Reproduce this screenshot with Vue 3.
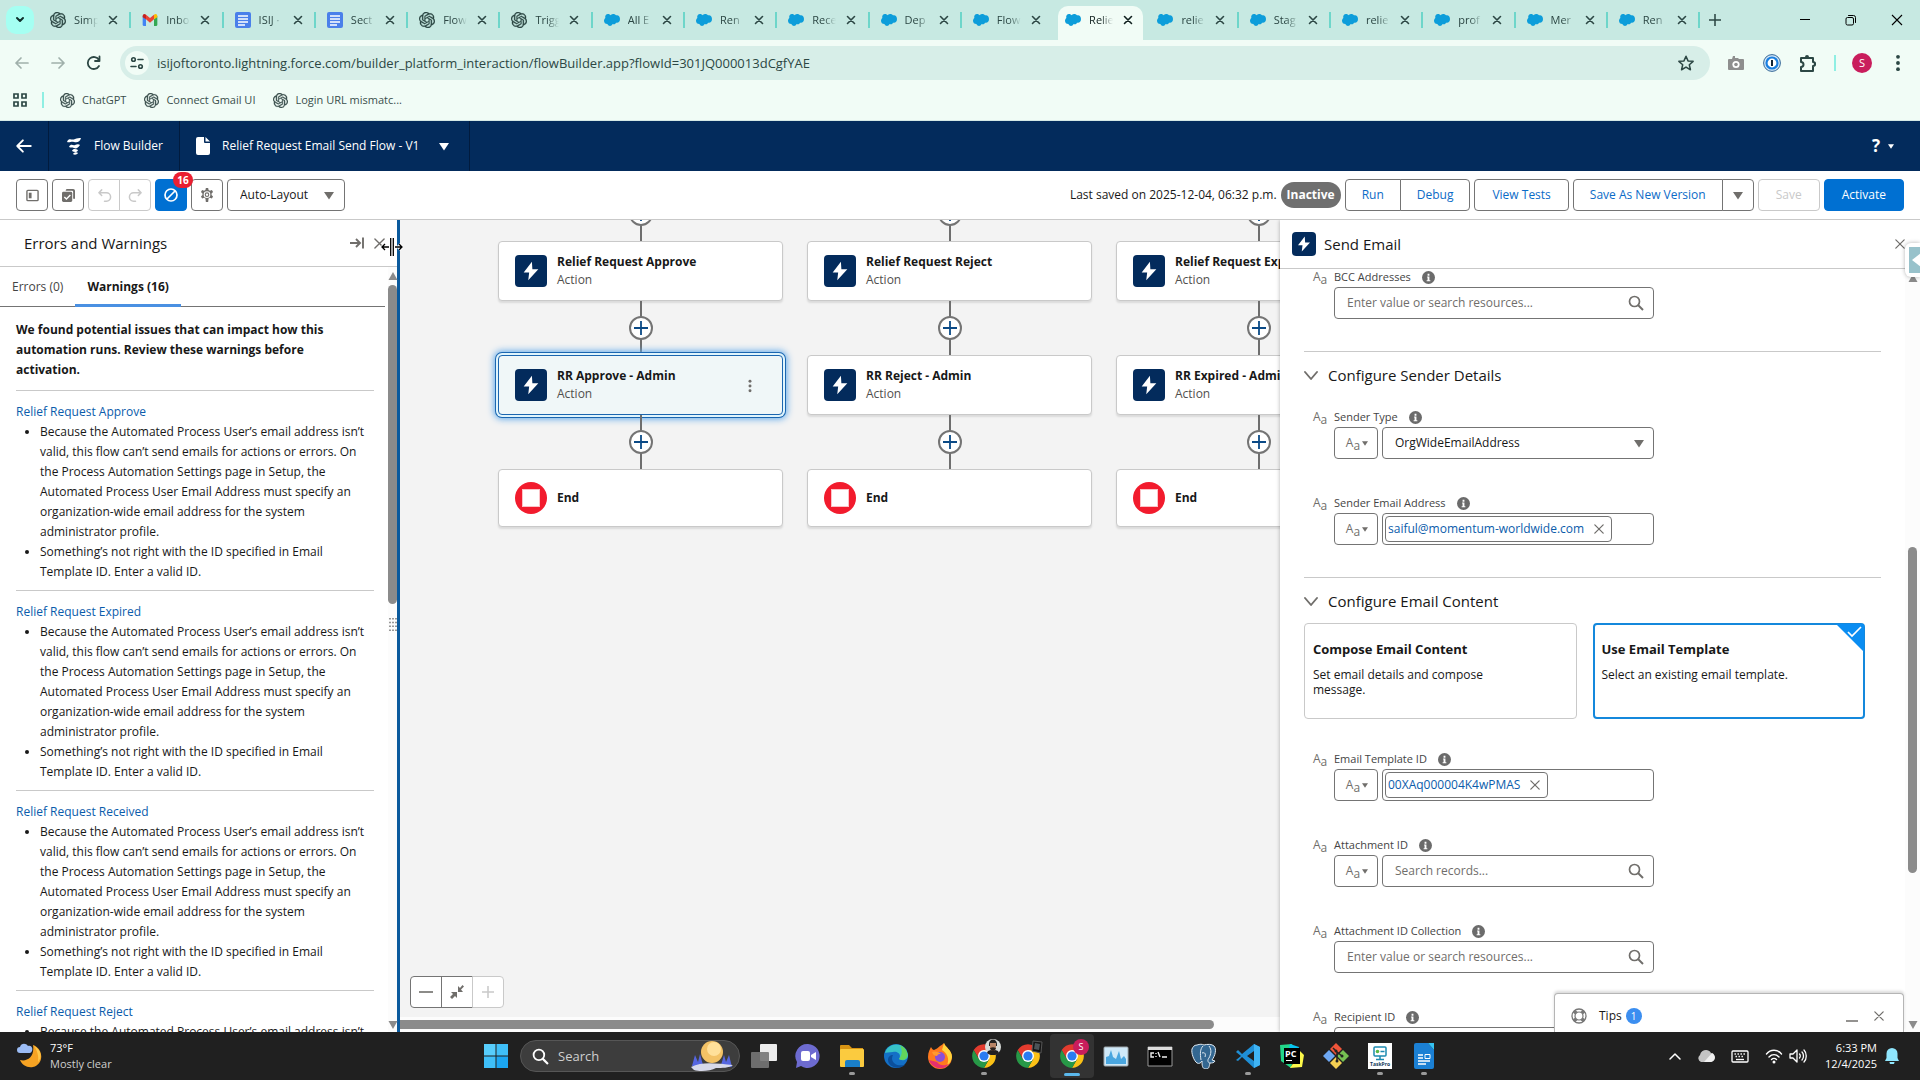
<template>
  <div class="screen">
    <header class="browser">
      <div class="tab-strip">
        <button class="tab-search" aria-label="Search tabs"><Icon name="chevronBold" :size="12" /></button>
        <div class="tabs">
          <div
            v-for="(tab, i) in browserTabs"
            :key="i"
            class="tab"
            :class="{ active: i === activeTab, 'no-line': i === activeTab - 1 || i === activeTab }"
          >
            <Icon :name="tab.icon" :size="16" />
            <span class="tab-title">{{ tab.title }}</span>
            <button class="tab-close" aria-label="Close tab"><Icon name="closeBold" :size="10" /></button>
          </div>
        </div>
        <button class="new-tab" aria-label="New tab"><Icon name="plus" :size="12" /></button>
        <div class="window-controls">
          <button aria-label="Minimize"><Icon name="winMin" :size="12" /></button>
          <button aria-label="Restore"><Icon name="winRestore" :size="12" /></button>
          <button aria-label="Close window"><Icon name="winClose" :size="12" /></button>
        </div>
      </div>

      <div class="address-row">
        <button class="nav-btn faded" aria-label="Back"><Icon name="arrowLeft" :size="16" /></button>
        <button class="nav-btn faded" aria-label="Forward"><Icon name="arrowRight" :size="16" /></button>
        <button class="nav-btn" aria-label="Reload"><Icon name="reload" :size="16" /></button>
        <div class="omnibox">
          <button class="site-info" aria-label="Site information"><Icon name="tune" :size="16" /></button>
          <input class="url" aria-label="Address" :value="url" />
          <button class="star" aria-label="Bookmark this tab"><Icon name="star" :size="18" /></button>
        </div>
        <div class="extensions">
          <button aria-label="Camera"><Icon name="camera" :size="18" /></button>
          <button aria-label="1Password"><Icon name="onePassword" :size="18" /></button>
          <button aria-label="Extensions"><Icon name="puzzle" :size="20" /></button>
        </div>
        <span class="mint-line"></span>
        <button class="avatar">S</button>
        <button class="browser-menu" aria-label="Menu"><Icon name="dots" :size="18" /></button>
      </div>

      <nav class="bookmarks">
        <button class="apps-btn" aria-label="Apps"><Icon name="apps" :size="16" /></button>
        <span class="mint-line"></span>
        <a v-for="name in bookmarks" :key="name" href="#" class="bookmark">
          <Icon name="openai" :size="15" />{{ name }}
        </a>
      </nav>
    </header>

    <div class="app-header">
      <a href="#" class="header-cell back" aria-label="Back"><Icon name="arrowLeft" :size="18" /></a>
      <div class="header-cell product"><Icon name="flow" :size="18" /><span>Flow Builder</span></div>
      <button class="header-cell flow-name">
        <Icon name="file" :size="18" /><span>Relief Request Email Send Flow - V1</span><Icon name="caret" :size="10" />
      </button>
      <button class="help" aria-label="Help"><b>?</b><Icon name="caret" :size="6" /></button>
    </div>

    <div class="toolbar">
      <button class="btn icon-btn" aria-label="Toggle toolbox"><Icon name="toolbox" :size="13" /></button>
      <button class="btn icon-btn" aria-label="Select elements"><Icon name="select" :size="13" /></button>
      <div class="group">
        <button class="btn icon-btn" disabled aria-label="Undo"><Icon name="undo" :size="15" /></button>
        <button class="btn icon-btn" disabled aria-label="Redo"><Icon name="redo" :size="15" /></button>
      </div>
      <button class="btn icon-btn brand errors-btn" aria-label="Errors and warnings">
        <Icon name="ban" :size="16" /><span class="count">16</span>
      </button>
      <button class="btn icon-btn" aria-label="Settings"><Icon name="gear" :size="14" /></button>
      <div class="layout-select">
        <select aria-label="Layout"><option>Auto-Layout</option></select>
        <Icon name="caret" :size="10" />
      </div>

      <span class="saved">Last saved on 2025-12-04, 06:32 p.m.</span>
      <span class="status">Inactive</span>
      <div class="group">
        <button class="btn text-btn">Run</button>
        <button class="btn text-btn">Debug</button>
      </div>
      <button class="btn text-btn wide">View Tests</button>
      <div class="group">
        <button class="btn text-btn">Save As New Version</button>
        <button class="btn icon-btn" aria-label="More save options"><Icon name="caret" :size="10" /></button>
      </div>
      <button class="btn text-btn wide" disabled>Save</button>
      <button class="btn text-btn wide brand">Activate</button>
    </div>

    <main class="workspace">
      <aside class="issues">
        <div class="issues-head">
          <h2>Errors and Warnings</h2>
          <button aria-label="Dock panel"><Icon name="dock" :size="14" /></button>
          <button aria-label="Close panel"><Icon name="close" :size="11" /></button>
        </div>
        <div class="issues-main">
          <div class="issues-body">
            <div class="issue-tabs" role="tablist">
              <button role="tab">Errors (0)</button>
              <button role="tab" class="current" aria-selected="true">Warnings (16)</button>
            </div>
            <div class="issue-list">
              <p class="intro">We found potential issues that can impact how this automation runs. Review these warnings before activation.</p>
              <section v-for="name in warnings" :key="name" class="issue">
                <a href="#">{{ name }}</a>
                <ul>
                  <li v-for="text in warningTexts" :key="text">{{ text }}</li>
                </ul>
              </section>
            </div>
          </div>
          <div class="scrollbar">
            <Icon name="scrollUp" :size="10" />
            <span class="thumb issues-thumb"></span>
            <Icon class="grip" name="grip" :size="14" />
            <Icon name="scrollDown" :size="10" />
          </div>
        </div>
        <Icon class="resize-cursor" name="resize" :size="22" />
      </aside>

      <section class="canvas">
        <div class="columns">
          <div v-for="column in columns" :key="column.first" class="column">
            <div class="link"><button aria-label="Add element"><Icon name="plus" :size="14" /></button></div>
            <article class="node">
              <span class="node-icon"><Icon name="bolt" :size="22" /></span>
              <div><h3>{{ column.first }}</h3><p>Action</p></div>
            </article>
            <div class="link"><button aria-label="Add element"><Icon name="plus" :size="14" /></button></div>
            <article class="node" :class="{ selected: column.selected }">
              <span class="node-icon"><Icon name="bolt" :size="22" /></span>
              <div><h3>{{ column.second }}</h3><p>Action</p></div>
              <button v-if="column.selected" class="node-menu" aria-label="Element menu"><Icon name="dots" :size="14" /></button>
            </article>
            <div class="link"><button aria-label="Add element"><Icon name="plus" :size="14" /></button></div>
            <article class="node end">
              <Icon name="stop" :size="32" />
              <h3>End</h3>
            </article>
          </div>
        </div>
        <div class="canvas-foot">
          <div class="group">
            <button class="btn icon-btn" aria-label="Zoom out"><Icon name="minus" :size="14" /></button>
            <button class="btn icon-btn" aria-label="Zoom to fit"><Icon name="fit" :size="14" /></button>
            <button class="btn icon-btn" disabled aria-label="Zoom in"><Icon name="plus" :size="12" /></button>
          </div>
        </div>
        <div class="h-scroll"><span></span></div>
      </section>

      <aside class="properties">
        <div class="prop-head">
          <span class="node-icon small"><Icon name="bolt" :size="18" /></span>
          <h2>Send Email</h2>
          <button aria-label="Close"><Icon name="close" :size="10" /></button>
        </div>
        <div class="prop-main">
          <form class="prop-body" @submit.prevent>
            <div v-for="group in groups" :key="group.key" class="prop-group">
              <button v-if="group.title" type="button" class="group-title">
                <Icon name="chevron" :size="14" />{{ group.title }}
              </button>
              <div v-if="group.picker" class="picker">
                <label v-for="option in contentOptions" :key="option.title" class="option">
                  <input type="radio" name="content" :value="option.title" v-model="contentMode" />
                  <strong>{{ option.title }}</strong>
                  <span>{{ option.text }}</span>
                  <Icon class="option-mark" name="mark" :size="28" />
                </label>
              </div>
              <div class="fields">
                <div v-for="field in group.fields" :key="field.id" class="field">
                  <div class="field-label">
                    <span class="type">A<sub>a</sub></span>
                    <label :for="field.id">{{ field.label }}</label>
                    <Icon name="info" :size="13" />
                  </div>
                  <div class="field-row">
                    <button v-if="field.typed" type="button" class="btn type-btn" aria-label="Value type">
                      <span class="type">A<sub>a</sub></span><Icon name="caret" :size="6" />
                    </button>
                    <div class="control" :class="{ filled: field.pill }">
                      <template v-if="field.select">
                        <select :id="field.id"><option>{{ field.select }}</option></select>
                        <Icon name="caret" :size="10" />
                      </template>
                      <template v-else-if="field.pill">
                        <span class="pill">
                          <a href="#">{{ field.pill }}</a>
                          <button type="button" aria-label="Remove"><Icon name="close" :size="10" /></button>
                        </span>
                        <input :id="field.id" />
                      </template>
                      <template v-else>
                        <input :id="field.id" :placeholder="field.placeholder" />
                        <Icon name="search" :size="16" />
                      </template>
                    </div>
                  </div>
                </div>
              </div>
            </div>
          </form>
          <div class="scrollbar">
            <Icon name="scrollUp" :size="10" />
            <span class="thumb prop-thumb"></span>
            <Icon name="scrollDown" :size="10" />
          </div>
        </div>
        <button class="side-handle" aria-label="Open side panel"><Icon name="handle" :size="26" /></button>
      </aside>

      <div class="tips">
        <Icon name="lifebuoy" :size="16" />
        <span class="tips-title">Tips</span>
        <span class="tips-count">1</span>
        <button aria-label="Minimize tips"><Icon name="low" :size="14" /></button>
        <button aria-label="Close tips"><Icon name="close" :size="10" /></button>
      </div>
    </main>

    <footer class="taskbar">
      <div class="weather">
        <Icon name="weather" :size="26" />
        <div><div>73°F</div><div class="soft">Mostly clear</div></div>
      </div>
      <div class="task-center">
        <button class="task" aria-label="Start"><Icon name="windows" :size="24" /></button>
        <label class="task-search">
          <Icon name="search" :size="17" />
          <input aria-label="Search" placeholder="Search" />
          <Icon name="moon" :size="44" />
        </label>
        <button v-for="(app, i) in apps" :key="i" class="task" :class="app.state" :aria-label="app.name">
          <Icon :name="app.icon" :size="26" />
          <span v-if="app.badge === 'S'" class="task-badge">S</span>
          <Icon v-else-if="app.badge" class="task-pic" :name="app.badge" :size="16" />
        </button>
      </div>
      <div class="tray">
        <Icon name="trayUp" :size="12" />
        <Icon name="cloud" :size="18" />
        <Icon name="keyboard" :size="18" />
        <span class="tray-pair"><Icon name="wifi" :size="18" /><Icon name="sound" :size="18" /></span>
        <time>6:33 PM<br />12/4/2025</time>
        <Icon name="bell" :size="16" />
      </div>
    </footer>
  </div>
</template>

<script setup>
import { h, ref } from 'vue'

const line = 'fill="none" stroke="currentColor" stroke-linecap="round" stroke-linejoin="round"'
const chrome = `<path fill="#fbc116" d="M43 13A22 22 0 0 1 24 46L33.500 29.500 24 13Z"/><path fill="#e33b2e" d="M5 13A22 22 0 0 1 43 13H24L14.500 29.500Z"/><path fill="#279847" d="M5 13L14.500 29.500H33.500L24 46A22 22 0 0 1 5 13Z"/><circle cx="24" cy="24" r="11" fill="#fff"/><circle cx="24" cy="24" r="8.500" fill="#2a7cf0"/>`

// name: [viewBox, markup]
const icons = {
  openai: ['0 0 24 24', '<path fill="currentColor" stroke="currentColor" stroke-width=".5" d="M22.2819 9.8211a5.9847 5.9847 0 0 0-.5157-4.9108 6.0462 6.0462 0 0 0-6.5098-2.9A6.0651 6.0651 0 0 0 4.9807 4.1818a5.9847 5.9847 0 0 0-3.9977 2.9 6.0462 6.0462 0 0 0 .7427 7.0966 5.98 5.98 0 0 0 .511 4.9107 6.051 6.051 0 0 0 6.5146 2.9001A5.9847 5.9847 0 0 0 13.2599 24a6.0557 6.0557 0 0 0 5.7718-4.2058 5.9894 5.9894 0 0 0 3.9977-2.9001 6.0557 6.0557 0 0 0-.7475-7.0729zm-9.022 12.6081a4.4755 4.4755 0 0 1-2.8764-1.0408l.1419-.0804 4.7783-2.7582a.7948.7948 0 0 0 .3927-.6813v-6.7369l2.02 1.1686a.071.071 0 0 1 .038.052v5.5826a4.504 4.504 0 0 1-4.4945 4.4944zm-9.6607-4.1254a4.4708 4.4708 0 0 1-.5346-3.0137l.142.0852 4.783 2.7582a.7712.7712 0 0 0 .7806 0l5.8428-3.3685v2.3324a.0804.0804 0 0 1-.0332.0615L9.74 19.9502a4.4992 4.4992 0 0 1-6.1408-1.6464zM2.3408 7.8956a4.485 4.485 0 0 1 2.3655-1.9728V11.6a.7664.7664 0 0 0 .3879.6765l5.8144 3.3543-2.0201 1.1685a.0757.0757 0 0 1-.071 0l-4.8303-2.7865A4.504 4.504 0 0 1 2.3408 7.872zm16.5963 3.8558L13.1038 8.364 15.1192 7.2a.0757.0757 0 0 1 .071 0l4.8303 2.7913a4.4944 4.4944 0 0 1-.6765 8.1042v-5.6772a.79.79 0 0 0-.407-.667zm2.0107-3.0231l-.142-.0852-4.7735-2.7818a.7759.7759 0 0 0-.7854 0L9.409 9.2297V6.8974a.0662.0662 0 0 1 .0284-.0615l4.8303-2.7866a4.4992 4.4992 0 0 1 6.6802 4.66zM8.3065 12.863l-2.02-1.1638a.0804.0804 0 0 1-.038-.0567V6.0742a4.4992 4.4992 0 0 1 7.3757-3.4537l-.142.0805L8.704 5.459a.7948.7948 0 0 0-.3927.6813zm1.0976-2.3654l2.602-1.4998 2.6069 1.4998v2.9994l-2.5974 1.4997-2.6067-1.4997Z"/>'],
  gmail: ['0 0 24 24', '<path fill="#4285f4" d="M1 6v13a2 2 0 0 0 2 2h3V11z"/><path fill="#34a853" d="M18 21h3a2 2 0 0 0 2-2V6l-5 5z"/><path fill="#ea4335" d="M6 11V4l6 5 6-5v7l-6 5z"/><path fill="#c5221f" d="M1 6c0-3 3-4 5-2v7L1 8z"/><path fill="#fbbc04" d="M23 6c0-3-3-4-5-2v7l5-3z"/>'],
  docs: ['0 0 16 16', '<rect width="16" height="16" rx="2" fill="#4a80ea"/><path stroke="#fff" stroke-width="1.600" d="M3 4h10M3 7h10M3 10h10M3 13h7"/>'],
  salesforce: ['0 0 24 24', '<path fill="#0d9dda" d="M10 5a5 5 0 0 1 4-2c2 0 3 1 4 2 3-1 6 1 6 5.500s-3 6.500-6 5.500c-1 2-3 3-5 2-2 4-6 4-8 0-3 0-5-2-5-5 0-1 1-3 2-4-1-3 1-6 4-6 2 0 3 1 4 2z"/>'],
  chevronBold: ['0 0 12 12', `<path ${line} stroke-width="2" d="M3 4l3 3 3-3"/>`],
  closeBold: ['0 0 10 10', `<path ${line} stroke-width="1.600" d="M1.500 1.500l7 7M8.500 1.500l-7 7"/>`],
  close: ['0 0 12 12', `<path ${line} stroke-width="1.500" d="M1 1l10 10M11 1L1 11"/>`],
  plus: ['0 0 14 14', '<path stroke="currentColor" stroke-width="1.800" d="M7 0v14M0 7h14"/>'],
  minus: ['0 0 14 14', '<path stroke="currentColor" stroke-width="1.600" d="M0 7h14"/>'],
  low: ['0 0 14 14', '<path stroke="currentColor" stroke-width="1.500" d="M1 12h12"/>'],
  winMin: ['0 0 12 12', '<path stroke="currentColor" d="M1 5.500h10"/>'],
  winRestore: ['0 0 12 12', `<path ${line} d="M3.500 1.500h5a2 2 0 0 1 2 2v5"/><rect x="1" y="3.500" width="7.500" height="7.500" rx="1.500" fill="none" stroke="currentColor"/>`],
  winClose: ['0 0 12 12', '<path stroke="currentColor" stroke-width="1.100" d="M1 1l10 10M11 1L1 11"/>'],
  arrowLeft: ['0 0 16 16', `<path ${line} stroke-width="1.700" d="M14 8H2M7 3L2 8l5 5"/>`],
  arrowRight: ['0 0 16 16', `<path ${line} stroke-width="1.700" d="M2 8h12M9 3l5 5-5 5"/>`],
  reload: ['0 0 16 16', `<path ${line} stroke-width="1.800" d="M13 11A6 6 0 1 1 13 5M13.500 1.500V6H9"/>`],
  tune: ['0 0 16 16', `<g ${line} stroke-width="1.600"><circle cx="4.500" cy="4.500" r="1.800"/><circle cx="11.500" cy="11.500" r="1.800"/><path d="M9 4.500h5M2 11.500h5"/></g>`],
  star: ['0 0 24 24', `<path ${line} stroke-width="2" d="M12 3l2.700 6.200 6.800.600-5.100 4.500 1.500 6.700-5.900-3.500L6.100 21l1.500-6.700-5.100-4.500 6.800-.600z"/>`],
  camera: ['0 0 18 18', '<path fill="#8e8e8e" d="M2 5h3l1-3h2v2h3l1 1h4a1 1 0 0 1 1 1v9a1 1 0 0 1-1 1H2a1 1 0 0 1-1-1V6a1 1 0 0 1 1-1z"/><circle cx="9" cy="10.500" r="3.600" fill="#fff"/><circle cx="9" cy="10.500" r="1.800" fill="#8e8e8e"/>'],
  onePassword: ['0 0 18 18', '<circle cx="9" cy="9" r="8.400" fill="#cfe4f7" stroke="#356796"/><circle cx="9" cy="9" r="5.500" fill="#fff" stroke="#1a7fe0" stroke-width="2.200"/><path stroke="#123" stroke-width="2" d="M9 6v6"/>'],
  puzzle: ['0 0 20 20', `<path ${line} stroke-width="2" d="M3 5h12v4a1 1 0 0 1 0 4v5H3v-4a2.500 2.500 0 0 0 0-5z"/><path fill="currentColor" d="M7 4a2 2 0 0 1 4 0zM16 9a2 2 0 0 1 0 4z"/>`],
  dots: ['0 0 16 16', '<g fill="currentColor"><circle cx="8" cy="2.500" r="1.700"/><circle cx="8" cy="8" r="1.700"/><circle cx="8" cy="13.500" r="1.700"/></g>'],
  apps: ['0 0 16 16', '<g fill="none" stroke="currentColor" stroke-width="1.700"><path d="M2 2h4v4H2zM10 2h4v4h-4zM2 10h4v4H2zM10 10h4v4h-4z"/></g>'],
  flow: ['0 0 18 18', '<g fill="currentColor"><path d="M2 5c2-5 5-1 8-3 2-1 4-1 6-1-1 4-4 5-7 4-3-1-4 1-7 0z"/><path d="M4 10c2-4 4-1 6-2 2-1 4-1 5 0-2 3-4 4-6 3-2-1-3 0-5-1z"/><path d="M7 14c1-3 4-2 6-1-1 3-4 2-6 1z"/><path d="M8 17c1-2 4-2 5-1-1 2-4 2-5 1z"/></g>'],
  file: ['0 0 18 18', '<path fill="currentColor" d="M4 0h6v5a1 1 0 0 0 1 1h5v10a2 2 0 0 1-2 2H4a2 2 0 0 1-2-2V2a2 2 0 0 1 2-2z"/><path fill="currentColor" d="M11.500 0l4.500 4.500h-4.500z"/>'],
  caret: ['0 0 10 10', '<path fill="currentColor" d="M0 2h10L5 9.500z"/>'],
  chevron: ['0 0 14 14', `<path ${line} stroke-width="1.900" d="M1 4l6 7 6-7"/>`],
  toolbox: ['0 0 14 14', '<rect x="1" y="1.500" width="12" height="11" rx="1" fill="none" stroke="currentColor" stroke-width="1.500"/><path fill="currentColor" d="M3 4h3v6H3z"/>'],
  select: ['0 0 14 14', `<path fill="currentColor" d="M5 0h7a2 2 0 0 1 2 2v7a1 1 0 0 1-2 1V3a1 1 0 0 0-1-1H4a2 2 0 0 1 1-2z"/><rect y="3" width="11" height="11" rx="1.500" fill="currentColor"/><path d="M2.500 8.500l2.300 2.300L9 6.500" fill="none" stroke="#fff" stroke-width="1.500"/>`],
  undo: ['0 0 16 16', `<path ${line} stroke-width="1.600" d="M2 5h8a4.500 4.500 0 0 1 0 9H8M5 2L2 5l3 3"/>`],
  redo: ['0 0 16 16', `<path ${line} stroke-width="1.600" d="M14 5H6a4.500 4.500 0 0 0 0 9h2M11 2l3 3-3 3"/>`],
  ban: ['0 0 16 16', '<circle cx="8" cy="8" r="6" fill="none" stroke="currentColor" stroke-width="1.700"/><path stroke="currentColor" stroke-width="1.700" d="M12 4l-8 8"/>'],
  gear: ['0 0 16 16', '<path fill="currentColor" fill-rule="evenodd" d="M6.700 0h2.600l.500 2.300 1.500.900 2.300-.800 1.300 2.300-1.700 1.600v1.800l1.700 1.600-1.300 2.300-2.300-.800-1.500.900L9.300 16H6.700l-.500-3.900-1.500-.900-2.300.800-1.300-2.300 1.700-1.600V6.300L1.100 4.700l1.300-2.300 2.300.800 1.500-.900zM8 3.800a3.800 3.800 0 1 0 0 7.600 3.800 3.800 0 0 0 0-7.600z"/><circle cx="8" cy="7.600" r="2" fill="none" stroke="currentColor" stroke-width="1.300"/>'],
  dock: ['0 0 14 14', '<path fill="none" stroke="currentColor" stroke-width="1.900" d="M0 7h9M6 3l4 4-4 4M13 1.500v11"/>'],
  scrollUp: ['0 0 10 10', '<path fill="#8b8b8b" d="M5 1l4.500 8h-9z"/>'],
  scrollDown: ['0 0 10 10', '<path fill="#8b8b8b" d="M5 9L.500 1h9z"/>'],
  grip: ['0 0 14 14', '<path stroke="#777" stroke-width="1.500" stroke-dasharray="1.500 2.300" d="M4 0v14M7 0v14M10 0v14"/>'],
  resize: ['0 0 22 22', '<path fill="none" stroke="#fff" stroke-width="3" d="M1 11h7M4 8l-3 3 3 3M21 11h-7M18 8l3 3-3 3M11 2v18"/><path fill="none" stroke="#000" stroke-width="1.300" d="M1 11h7M4 8l-3 3 3 3M21 11h-7M18 8l3 3-3 3M9.700 2v18M12.300 2v18"/>'],
  bolt: ['0 0 24 24', '<path fill="#fff" d="M13 2L4 13.500h6L9 22l11-12h-6.500z"/>'],
  stop: ['0 0 32 32', '<circle cx="16" cy="16" r="16" fill="#f21b2d"/><rect x="7.500" y="7.500" width="17" height="17" fill="#fff" stroke="#fcc3c7"/>'],
  fit: ['0 0 14 14', '<path fill="currentColor" d="M1 7h6v6l-2-2-3 3-2-2 3-3zM13 7H8V1l2 2 2.500-3L14 1.500 11 4.500z"/>'],
  info: ['0 0 14 14', '<circle cx="7" cy="7" r="7" fill="#6b6b6b"/><path fill="#fff" d="M6 3h2v2H6zM5.500 6H8v4h1v1H5v-1h1V7h-.500z"/>'],
  search: ['0 0 16 16', '<circle cx="6.500" cy="6.500" r="5" fill="none" stroke="currentColor" stroke-width="1.700"/><path stroke="currentColor" stroke-width="2" d="M10 10l5 5"/>'],
  mark: ['0 0 28 28', '<path fill="#0a8df2" d="M0 0h28v28z"/><path fill="none" stroke="#fff" stroke-width="1.700" d="M12 8l4 4 9-9"/>'],
  handle: ['0 0 26 26', '<path fill="#98c2cb" d="M0 0h26v26H0z"/><path fill="#fff" d="M12 6v14L3 13z"/>'],
  lifebuoy: ['0 0 16 16', '<circle cx="8" cy="8" r="7" fill="none" stroke="#777" stroke-width="1.300"/><circle cx="8" cy="8" r="4" fill="none" stroke="#777" stroke-width="1.200"/><path stroke="#777" stroke-width="3.500" d="M3 3l2.300 2.300M13 3l-2.300 2.300M3 13l2.300-2.300M13 13l-2.300-2.300"/>'],
  weather: ['0 0 26 26', '<path fill="#f6a323" d="M16 2c11 4 11 19 0 22-6 1-11-2-13-7 7 2 15-3 13-15z"/><path fill="#ffc84a" d="M17 3c8 4 8 12 4 16 1-6-1-12-4-16z"/><path fill="#9bbcf5" d="M3 10a3 3 0 0 1 0-6c1-4 6-4 8-1 4-1 5 3 4 5-1 2-2 2-3 2z"/>'],
  windows: ['0 0 24 24', '<path fill="#57cdfc" d="M0 0h11.500v11.500H0z"/><path fill="#3fbff8" d="M12.500 0H24v11.500H12.500zM0 12.500h11.500V24H0z"/><path fill="#1ba6f2" d="M12.500 12.500H24V24H12.500z"/>'],
  moon: ['0 0 44 30', '<circle cx="22" cy="11" r="11" fill="#f3c266"/><circle cx="24" cy="8" r="7" fill="#ffe09a"/><path fill="#5566e0" d="M2 25l3-11 3 7 2-8 3 11h18l3-10 2 7 3-7 3 12z"/><path fill="#d7d9ea" d="M1 26c12-6 27-3 42-2-4 3-11 3-17 3-5 3-16 4-22 2z"/>'],
  taskView: ['0 0 26 26', '<rect x="9" y="1" width="17" height="17" rx="1" fill="#ececec"/><rect x="0" y="9" width="18" height="16" rx="1" fill="#777" opacity=".9"/>'],
  chat: ['0 0 26 26', '<path fill="#6d6bd0" d="M13 1a12 12 0 1 1-7 22l-5 2 1-6A12 12 0 0 1 13 1z"/><rect x="6" y="8" width="9" height="10" rx="2" fill="#fff"/><path fill="#fff" d="M16 12l5-3v8l-5-3z"/>'],
  folder: ['0 0 26 26', '<path fill="#d89413" d="M1 3a1 1 0 0 1 1-1h8l3 3h11v4H1z"/><rect x="1" y="6" width="24" height="18" rx="1" fill="#fbcb3f"/><path fill="#1a7fc8" d="M6 24v-5a2 2 0 0 1 2-2h11a2 2 0 0 1 2 2v5z"/>'],
  edge: ['0 0 26 26', '<circle cx="13" cy="13" r="12" fill="#1470c6"/><path fill="#37c2c7" d="M2 10C5-1 22-2 25 12c0 6-7 6-9 4 3-5-2-8-6-7-4 0-7 1-8 1z"/><path fill="#62d65c" d="M17 2c5 2 9 8 7 12-2 4-7 3-8 2 4-5 3-10 1-14z"/><path fill="#0b4f9c" d="M10 12c-3 5 1 12 12 10-8 6-17 1-17-5 0-3 2-5 5-5z"/>'],
  firefox: ['0 0 26 26', '<path fill="#ff7a1e" d="M13 3c2-1 3-2 4-3 1 4 8 7 8 14a12 12 0 0 1-24 0C1 9 3 6 4 4c1 2 2 3 3 3 2-1 4-2 6-4z"/><path fill="#ffd43c" d="M17 0c1 4 8 7 8 14-1 5-3 7-5 8 3-6 0-12-5-15z"/><path fill="#e5306f" d="M2 17c3 9 15 11 20 4-5 2-9 2-12-2z"/><circle cx="13" cy="14" r="5" fill="#8a4fd8"/><path fill="#ff9a2e" d="M5 9c4-1 7 0 9 2-2 0-3 0-4 2-2 0-4-1-5-4z"/>'],
  chrome: ['0 0 48 48', chrome],
  monitor: ['0 0 26 26', '<rect x="1" y="4" width="24" height="19" rx="1" fill="#cfe9f8" stroke="#a0a8ad"/><path fill="#4aa6df" d="M3 21v-7l3-1 2-6 2 7 3 2 3-8 2 8 3-3 2 3v5z"/>'],
  terminal: ['0 0 26 26', '<path fill="#000" stroke="#999" d="M1 4h24v19H1z"/><path fill="#ddd" d="M1 4h24v3H1z"/><path fill="none" stroke="#eee" stroke-width="1.400" d="M7 10H4v4h3M9 10v1M9 13v1M11 9l2 5M15 14h5"/>'],
  postgres: ['0 0 26 26', '<path fill="#336791" stroke="#dfe9f1" d="M6 2c3-1 5-1 7 0 3-1 8-1 10 1 3 3 1 10-2 14l3 1c-1 2-3 2-5 2-1 4-1 6-4 6-4 0-4-4-4-8-1 2-3 3-5 2C3 18 0 10 1 6c1-2 2-4 5-4z"/><path fill="none" stroke="#dfe9f1" d="M12 3c-3 3-3 8-2 14M18 3c3 4 2 8 0 12-2 2-1 5 1 5M11 10c3-1 4 1 3 4"/>'],
  vscode: ['0 0 26 26', '<path fill="#1f8fd6" d="M19 1l6 3v18l-6 3L7 14l-4 4-2-1 5-4-5-4 2-2 4 4zM19 8l-7 5 7 5z"/><path fill="#3fb4f4" d="M19 1l6 3v18l-6 3z"/>'],
  pycharm: ['0 0 26 26', '<path fill="#22d789" d="M1 2l12-1 3 8-4 16-10-7z"/><path fill="#07c3f2" d="M11 1l9 3-2 8-9-2z"/><path fill="#fcf84a" d="M19 6l6 6-2 12-12 1 6-9z"/><path fill="#000" d="M5 5h16v16H5z"/><text x="6" y="14" font-family="Open Sans" font-size="9" font-weight="700" fill="#fff">PC</text><path fill="#fff" d="M7 17h6v1H7z"/>'],
  git: ['0 0 26 26', '<path fill="#f0553a" d="M13 0l6 6-6 6-6-6z"/><path fill="#6ea8f3" d="M6 7l6 6-6 6-6-6z"/><path fill="#75c152" d="M20 7l6 6-6 6-6-6z"/><path fill="#f5cf52" d="M13 14l6 6-6 6-6-6z"/><path fill="none" stroke="#222" stroke-width="1.500" d="M10 5l4 4v9M14 9l5 4"/><g fill="#222"><circle cx="13" cy="8" r="1.500"/><circle cx="14" cy="18" r="1.500"/><circle cx="19" cy="13" r="1.500"/></g>'],
  taskpro: ['0 0 26 26', '<path fill="#fff" d="M1 0h24v26H1z"/><rect x="7" y="4" width="12" height="9" rx="1" fill="#fff" stroke="#1d8ab0" stroke-width="1.500"/><circle cx="10.500" cy="8.500" r="1.800" fill="#58b947"/><path stroke="#1d8ab0" stroke-width="1.500" d="M13.500 8.500h4M13 13v3M9 16.500h8"/><text x="3" y="23" font-family="Open Sans" font-size="5" font-weight="700" fill="#123a5a">TaskPro</text>'],
  writer: ['0 0 26 26', '<path fill="#1b80d4" d="M5 0h12l6 7v17a2 2 0 0 1-2 2H5a2 2 0 0 1-2-2V2a2 2 0 0 1 2-2z"/><path fill="#35c3f1" d="M17 0h6v7z"/><path stroke="#fff" stroke-width="1.400" d="M7 12h5M7 15h5M7 18h12M7 21h8"/><path fill="none" stroke="#fff" d="M14 11.500h5v4h-5z"/>'],
  person: ['0 0 16 16', '<circle cx="8" cy="8" r="8" fill="#d8dbd8"/><path fill="#23201f" d="M2 14c1-3 3-3 6-3s5 0 6 3c-3 3-9 3-12 0zM4 5c0-6 8-6 8 0v2H4z"/><path fill="#b98566" d="M5 4h6v5c-1 4-5 4-6 0z"/><path fill="#2a211d" d="M5 9c2-1 4-1 6 0-1 4-5 4-6 0z"/>'],
  gadget: ['0 0 16 16', '<path fill="#161616" stroke="#555" d="M4 2l9 1-1 11-9-2z"/><path fill="#4b5358" d="M6 4l5 1-1 6-5-1z"/>'],
  trayUp: ['0 0 12 12', `<path ${line} stroke-width="1.500" d="M1 9l5-5 5 5"/>`],
  cloud: ['0 0 18 18', '<path fill="#c4c4c4" d="M4 15a4 4 0 0 1-1-7c1-5 8-7 11-2 5 1 5 8 0 9z"/><path fill="#efefef" d="M7 15l8-9c4 2 4 8-1 9z"/>'],
  keyboard: ['0 0 18 18', `<rect x="1" y="4" width="16" height="11" rx="1" ${line} stroke-width="1.300"/><path stroke="currentColor" stroke-width="1.400" stroke-dasharray="1.400 1.600" d="M3.500 7h11M4.500 9.500h9"/><path stroke="currentColor" stroke-width="1.300" d="M5 12.500h8"/>`],
  wifi: ['0 0 18 18', `<g ${line} stroke-width="1.400"><path d="M1.500 7c4-5 11-5 15 0M4 10c3-3 7-3 10 0M6.500 12.500c1.500-1.500 3.500-1.500 5 0"/></g><circle cx="9" cy="15" r="1.500" fill="currentColor"/>`],
  sound: ['0 0 18 18', `<path ${line} stroke-width="1.300" d="M1 7v4h3l4 4V3L4 7zM10.500 7c1 1 1 3 0 4M13 5c2 2 2 6 0 8M15 3c3 3 3 9 0 12"/>`],
  bell: ['0 0 16 16', '<path fill="#8fe6fd" d="M8 0a5.500 5.500 0 0 1 5.500 5.500V10l1.500 3H1l1.500-3V5.500A5.500 5.500 0 0 1 8 0zM5.500 14h5a2.500 2.500 0 0 1-5 0z"/>']
}

const Icon = ({ name, size }) =>
  h('svg', {
    viewBox: icons[name][0],
    width: size,
    height: size,
    'aria-hidden': 'true',
    innerHTML: icons[name][1]
  })

const browserTabs = [
  { icon: 'openai', title: 'Simp' },
  { icon: 'gmail', title: 'Inbo' },
  { icon: 'docs', title: 'ISIJ ·' },
  { icon: 'docs', title: 'Sect' },
  { icon: 'openai', title: 'Flow' },
  { icon: 'openai', title: 'Trigg' },
  { icon: 'salesforce', title: 'All E' },
  { icon: 'salesforce', title: 'Ren' },
  { icon: 'salesforce', title: 'Rece' },
  { icon: 'salesforce', title: 'Dep' },
  { icon: 'salesforce', title: 'Flow' },
  { icon: 'salesforce', title: 'Relie' },
  { icon: 'salesforce', title: 'relie' },
  { icon: 'salesforce', title: 'Stag' },
  { icon: 'salesforce', title: 'relie' },
  { icon: 'salesforce', title: 'prof' },
  { icon: 'salesforce', title: 'Mer' },
  { icon: 'salesforce', title: 'Ren' }
]
const activeTab = 11
const url = 'isijoftoronto.lightning.force.com/builder_platform_interaction/flowBuilder.app?flowId=301JQ000013dCgfYAE'
const bookmarks = ['ChatGPT', 'Connect Gmail UI', 'Login URL mismatc...']

const warnings = ['Relief Request Approve', 'Relief Request Expired', 'Relief Request Received', 'Relief Request Reject']
const warningTexts = [
  'Because the Automated Process User’s email address isn’t valid, this flow can’t send emails for actions or errors. On the Process Automation Settings page in Setup, the Automated Process User Email Address must specify an organization-wide email address for the system administrator profile.',
  'Something’s not right with the ID specified in Email Template ID. Enter a valid ID.'
]

const columns = [
  { first: 'Relief Request Approve', second: 'RR Approve - Admin', selected: true },
  { first: 'Relief Request Reject', second: 'RR Reject - Admin' },
  { first: 'Relief Request Expired', second: 'RR Expired - Admin' }
]

const contentMode = ref('Use Email Template')
const contentOptions = [
  { title: 'Compose Email Content', text: 'Set email details and compose message.' },
  { title: 'Use Email Template', text: 'Select an existing email template.' }
]
const resourceHint = 'Enter value or search resources...'
const groups = [
  { key: 'recipients', fields: [{ id: 'bcc', label: 'BCC Addresses', placeholder: resourceHint }] },
  {
    key: 'sender',
    title: 'Configure Sender Details',
    fields: [
      { id: 'sender-type', label: 'Sender Type', typed: true, select: 'OrgWideEmailAddress' },
      { id: 'sender-email', label: 'Sender Email Address', typed: true, pill: 'saiful@momentum-worldwide.com' }
    ]
  },
  {
    key: 'content',
    title: 'Configure Email Content',
    picker: true,
    fields: [
      { id: 'template', label: 'Email Template ID', typed: true, pill: '00XAq000004K4wPMAS' },
      { id: 'attachment', label: 'Attachment ID', typed: true, placeholder: 'Search records...' },
      { id: 'attachments', label: 'Attachment ID Collection', placeholder: resourceHint },
      { id: 'recipient', label: 'Recipient ID', placeholder: resourceHint }
    ]
  }
]

const apps = [
  { name: 'Task view', icon: 'taskView' },
  { name: 'Chat', icon: 'chat' },
  { name: 'File Explorer', icon: 'folder', state: 'running' },
  { name: 'Edge', icon: 'edge' },
  { name: 'Firefox', icon: 'firefox' },
  { name: 'Chrome', icon: 'chrome', state: 'running', badge: 'person' },
  { name: 'Chrome', icon: 'chrome', badge: 'gadget' },
  { name: 'Chrome', icon: 'chrome', state: 'current', badge: 'S' },
  { name: 'Resource Monitor', icon: 'monitor' },
  { name: 'Command Prompt', icon: 'terminal' },
  { name: 'pgAdmin', icon: 'postgres' },
  { name: 'VS Code', icon: 'vscode', state: 'running' },
  { name: 'PyCharm', icon: 'pycharm' },
  { name: 'Git', icon: 'git' },
  { name: 'TaskPro', icon: 'taskpro', state: 'running' },
  { name: 'Writer', icon: 'writer', state: 'running' }
]
</script>

<style>
body {
  overflow: hidden;
}
</style>

<style scoped>
* {
  box-sizing: border-box;
}

.screen {
  display: grid;
  grid-template-rows: auto auto auto minmax(0, 1fr) auto;
  height: 100vh;
  font-family: 'Open Sans', 'Noto Sans', sans-serif;
  font-size: 12px;
  line-height: 20px;
  color: #181818;
  background: #fff;
}

button,
input,
select {
  font: inherit;
  color: inherit;
  margin: 0;
  padding: 0;
  border: 0;
  background: none;
  outline: none;
}

button {
  display: flex;
  align-items: center;
  justify-content: center;
}

h2,
h3,
p,
ul {
  margin: 0;
  padding: 0;
}

a {
  color: #0b5cab;
  text-decoration: none;
}

svg {
  flex: none;
  display: block;
}

/* browser */
.browser {
  background: #f1fcf6;
  border-bottom: 1px solid #d5e9e6;
  color: #2c4744;
}

.tab-strip {
  display: flex;
  align-items: center;
  height: 40px;
  padding-left: 6px;
  background: #c7e9e2;
}

.tab-search {
  width: 28px;
  height: 28px;
  margin-right: 5px;
  border-radius: 10px;
  background: #a5fff2;
  color: #10302c;
}

.tabs {
  display: flex;
  flex: 1;
  align-self: stretch;
}

.tab {
  flex: 1;
  display: flex;
  align-items: center;
  position: relative;
  min-width: 0;
  padding-left: 11px;
  font-size: 11px;
}

.tab::after {
  content: '';
  position: absolute;
  right: 0;
  top: 12px;
  width: 2px;
  height: 16px;
  background: #6ed6ca;
}

.tab.no-line::after {
  display: none;
}

.tab > svg {
  position: relative;
}

.tab.active {
  color: #10201f;
}

.tab.active::before {
  content: '';
  position: absolute;
  inset: 6px 3px 0 4px;
  border-radius: 10px 10px 0 0;
  background: #f1fcf6;
}

.tab-title {
  position: relative;
  width: 24px;
  margin-left: 8px;
  overflow: hidden;
  white-space: nowrap;
  mask-image: linear-gradient(90deg, #000 50%, transparent);
}

.tab-close {
  position: relative;
  width: 16px;
  height: 16px;
  margin-left: 7px;
}

.new-tab {
  width: 30px;
  height: 30px;
}

.window-controls {
  display: flex;
  margin-left: 52px;
  color: #000;
}

.window-controls button {
  width: 46px;
  height: 40px;
}

.address-row {
  display: flex;
  align-items: center;
  height: 46px;
  padding: 0 13px 0 4px;
}

.nav-btn {
  width: 36px;
  height: 32px;
}

.faded {
  color: #a0b0ab;
}

.omnibox {
  flex: 1;
  display: flex;
  align-items: center;
  height: 34px;
  margin: 0 12px 0 8px;
  padding: 0 15px 0 5px;
  border-radius: 17px;
  background: #d7eee8;
}

.site-info {
  width: 24px;
  height: 24px;
  border-radius: 50%;
  background: #f1fcf6;
}

.url {
  flex: 1;
  min-width: 0;
  margin-left: 8px;
  font-size: 13px;
}

.extensions {
  display: flex;
  gap: 8px;
  padding-right: 12px;
}

.extensions button {
  width: 28px;
  height: 28px;
}

.mint-line {
  width: 2px;
  height: 16px;
  background: #8fefe3;
}

.avatar {
  width: 20px;
  height: 20px;
  margin-left: 16px;
  border-radius: 50%;
  background: #c91d5c;
  color: #fff;
  font-size: 11px;
}

.browser-menu {
  margin-left: 17px;
}

.bookmarks {
  display: flex;
  align-items: center;
  height: 34px;
  padding: 0 12px 6px;
}

.apps-btn {
  margin-right: 14px;
}

.bookmark {
  display: flex;
  align-items: center;
  gap: 7px;
  margin-left: 16px;
  color: #3a4f4c;
  font-size: 11px;
}

.bookmark + .bookmark {
  margin-left: 18px;
}

/* app header */
.app-header {
  display: flex;
  height: 50px;
  background: #032b5c;
  color: #fff;
}

.header-cell {
  display: flex;
  align-items: center;
  border-right: 1px solid #011b3e;
  color: #fff;
}

.back {
  justify-content: center;
  width: 49px;
}

.product {
  gap: 11px;
  padding: 0 16px;
}

.flow-name {
  gap: 10px;
  padding: 0 20px 0 14px;
}

.flow-name svg:last-child {
  margin-left: 10px;
}

.help {
  gap: 8px;
  margin-left: auto;
  padding-right: 26px;
}

.help b {
  font-size: 17px;
}

/* toolbar */
.toolbar {
  display: flex;
  align-items: center;
  gap: 4px;
  height: 49px;
  padding: 0 16px;
  border-bottom: 1px solid #c9c9c9;
}

.btn {
  height: 32px;
  border: 1px solid #747474;
  border-radius: 4px;
  background: #fff;
  color: #706e6b;
  white-space: nowrap;
}

.icon-btn {
  width: 32px;
}

.text-btn {
  padding: 0 16px;
  color: #0b6bc7;
}

.text-btn.wide {
  padding: 0 17px;
}

.btn:disabled {
  border-color: #c9c9c9;
  color: #c9c9c9;
}

.btn.brand {
  border-color: #0070d2;
  background: #0070d2;
  color: #fff;
}

.group {
  display: flex;
}

.group .btn:not(:first-child) {
  margin-left: -1px;
  border-top-left-radius: 0;
  border-bottom-left-radius: 0;
}

.group .btn:not(:last-child) {
  border-top-right-radius: 0;
  border-bottom-right-radius: 0;
}

.errors-btn {
  position: relative;
}

.count {
  position: absolute;
  top: -8px;
  right: -7px;
  width: 20px;
  border-radius: 8px;
  background: #ea1f31;
  font-size: 10px;
  font-weight: 700;
  line-height: 16px;
}

.layout-select {
  display: flex;
  align-items: center;
  height: 32px;
  width: 118px;
  padding: 0 10px 0 12px;
  border: 1px solid #747474;
  border-radius: 4px;
  color: #706e6b;
}

select {
  appearance: none;
  flex: 1;
  min-width: 0;
  color: #181818;
}

.saved {
  margin-left: auto;
  white-space: nowrap;
}

.status {
  padding: 3px 6px;
  border-radius: 13px;
  background: #6f6f6f;
  color: #fff;
  font-weight: 700;
}

/* workspace */
.workspace {
  display: grid;
  grid-template-columns: 400px minmax(0, 1fr) 640px;
  position: relative;
  overflow: hidden;
}

.issues {
  position: relative;
  display: flex;
  flex-direction: column;
  min-height: 0;
  border-right: 3px solid #0b5a9d;
}

h2 {
  font-size: 15px;
  font-weight: 400;
}

.issues-head {
  flex: none;
  display: flex;
  align-items: center;
  gap: 10px;
  height: 47px;
  padding: 0 12px 0 24px;
  border-bottom: 1px solid #c9c9c9;
  color: #706e6b;
}

.issues-head h2 {
  flex: 1;
  color: #181818;
}

.issues-main,
.prop-main {
  flex: 1;
  display: flex;
  min-height: 0;
}

.issues-body {
  flex: 1;
  overflow: hidden;
}

.issue-tabs {
  display: flex;
  height: 40px;
  margin-right: 3px;
  border-bottom: 1px solid #747474;
}

.issue-tabs button {
  height: 40px;
  padding: 0 12px;
  color: #444;
}

.issue-tabs .current {
  border-bottom: 3px solid #4a90e2;
  padding-top: 3px;
  color: #181818;
  font-weight: 700;
}

.issue-list {
  padding: 13px 14px 0 16px;
}

.intro {
  padding: 0 24px 10px 0;
  font-weight: 700;
}

.issue {
  padding: 11px 0 8px;
  border-top: 1px solid #c9c9c9;
}

.issue ul {
  padding-left: 24px;
}

.scrollbar {
  flex: none;
  display: flex;
  flex-direction: column;
  align-items: center;
  width: 9px;
  padding: 4px 0 2px;
  background: #fcfcfc;
}

.scrollbar svg:last-child {
  margin-top: auto;
}

.thumb {
  width: 9px;
  border-radius: 5px;
  background: #8b8b8b;
}

.issues-thumb {
  flex: 0 0 42%;
  margin: 4px 0 14px;
}

.prop-thumb {
  flex: 0 0 43%;
  margin-top: 264px;
}

.resize-cursor {
  position: absolute;
  top: 16px;
  right: -6px;
  z-index: 2;
}

/* canvas */
.canvas {
  display: flex;
  flex-direction: column;
  overflow: hidden;
  background: #f3f3f3;
}

.columns {
  flex: 1;
  display: flex;
  gap: 24px;
  min-height: 0;
  margin-top: -33px;
  padding-left: 98px;
}

.column {
  flex: none;
  width: 285px;
}

.link {
  display: flex;
  align-items: center;
  justify-content: center;
  height: 54px;
  background: linear-gradient(#6e6e6e, #6e6e6e) center / 2px 100% no-repeat;
}

.link button {
  width: 24px;
  height: 24px;
  border: 2px solid #747474;
  border-radius: 50%;
  background: #fff;
  color: #0b4a86;
}

.node {
  display: flex;
  align-items: center;
  gap: 10px;
  height: 60px;
  padding: 0 16px;
  border: 1px solid #c9c9c9;
  border-radius: 4px;
  background: #fff;
  box-shadow: 0 2px 2px rgba(0, 0, 0, 0.1);
  line-height: 18px;
}

.node.end {
  height: 58px;
}

.node h3 {
  font-size: 12px;
  font-weight: 700;
}

.node p {
  color: #514f4d;
}

.node-icon {
  flex: none;
  display: flex;
  align-items: center;
  justify-content: center;
  width: 32px;
  height: 32px;
  border-radius: 4px;
  background: #032b5c;
}

.node-icon.small {
  width: 24px;
  height: 24px;
}

.node.selected {
  border-color: #1b66b0;
  background: #f0f7f8;
  box-shadow: 0 0 0 2px #e0f5fd, 0 0 0 3px #1b66b0, 0 0 7px 4px #5ea8ea;
}

.node-menu {
  margin: 2px 9px 0 auto;
  color: #706e6b;
}

.canvas-foot {
  padding: 0 10px 9px;
}

.h-scroll {
  height: 15px;
  padding: 3px 66px 3px 0;
  background: #fcfcfc;
}

.h-scroll span {
  display: block;
  height: 9px;
  border-radius: 0 5px 5px 0;
  background: #8b8b8b;
}

/* properties */
.properties {
  position: relative;
  display: flex;
  flex-direction: column;
  min-height: 0;
  background: #fff;
  box-shadow: 0 0 4px rgba(0, 0, 0, 0.3);
}

.prop-head {
  flex: none;
  display: flex;
  align-items: center;
  gap: 8px;
  height: 49px;
  padding: 0 15px 0 12px;
  border-bottom: 1px solid #c9c9c9;
}

.prop-head h2 {
  flex: 1;
}

.prop-head button {
  color: #706e6b;
}

.prop-main .scrollbar {
  width: 15px;
}

.prop-body {
  flex: 1;
  overflow: hidden;
  padding: 0 24px;
}

.prop-group:first-child {
  margin-top: -12px;
}

.prop-group + .prop-group {
  margin-top: 32px;
  border-top: 1px solid #c9c9c9;
}

.group-title {
  gap: 10px;
  height: 45px;
  color: #181818;
  font-size: 15px;
}

.group-title svg {
  color: #706e6b;
}

.picker {
  display: grid;
  grid-template-columns: 1fr 1fr;
  gap: 16px;
  margin: 0 16px 20px 0;
}

.option {
  position: relative;
  display: flex;
  flex-direction: column;
  height: 96px;
  padding: 15px 60px 0 8px;
  border: 1px solid #c9c9c9;
  border-radius: 4px;
  line-height: 15px;
}

.option strong {
  margin-bottom: 8px;
  font-size: 13px;
  line-height: 20px;
}

.option input {
  position: absolute;
  opacity: 0;
}

.option-mark {
  position: absolute;
  top: -1px;
  right: -1px;
  visibility: hidden;
}

.option:has(:checked) {
  padding: 14px 59px 0 7px;
  border: 2px solid #1488dc;
}

.option:has(:checked) .option-mark {
  visibility: visible;
}

.fields {
  display: flex;
  flex-direction: column;
  gap: 34px;
  padding: 10px 0 0 9px;
}

.field-label {
  display: flex;
  align-items: center;
  height: 20px;
  color: #444;
  font-size: 11px;
}

.field-label svg {
  margin-left: 11px;
}

.type {
  flex: none;
  width: 21px;
  color: #706e6b;
  font-size: 12px;
  line-height: 16px;
}

.type sub {
  font-size: 12px;
  line-height: 0;
}

.field-row {
  display: flex;
  gap: 4px;
  width: 320px;
  margin-left: 21px;
}

.type-btn {
  width: 44px;
}

.type-btn .type {
  width: 18px;
}

.control {
  flex: 1;
  display: flex;
  align-items: center;
  height: 32px;
  min-width: 0;
  padding: 0 9px 0 12px;
  border: 1px solid #747474;
  border-radius: 4px;
  color: #706e6b;
}

.control.filled {
  padding: 0 2px;
}

.control input {
  flex: 1;
  min-width: 0;
  color: #181818;
}

.control input::placeholder {
  color: #706e6b;
}

.pill {
  display: flex;
  align-items: center;
  gap: 10px;
  height: 26px;
  padding: 0 7px 0 2px;
  border: 1px solid #747474;
  border-radius: 4px;
}

.side-handle {
  position: absolute;
  top: 23px;
  right: 0;
  width: 15px;
  height: 34px;
  justify-content: flex-start;
  overflow: hidden;
  padding-left: 4px;
  border-radius: 6px 0 0 6px;
  background: #fff;
  box-shadow: 0 0 4px rgba(0, 0, 0, 0.3);
}

.tips {
  position: absolute;
  right: 16px;
  bottom: 0;
  display: flex;
  align-items: center;
  width: 350px;
  height: 39px;
  padding: 6px 19px 0 16px;
  border: 1px solid #b5b5b5;
  border-bottom: 0;
  border-radius: 4px 4px 0 0;
  background: #fff;
  box-shadow: 0 -2px 3px rgba(0, 0, 0, 0.15);
}

.tips-title {
  margin: 0 4px 0 12px;
}

.tips-count {
  width: 16px;
  height: 16px;
  margin-right: auto;
  border-radius: 50%;
  background: #3b8ef0;
  color: #fff;
  font-size: 10px;
  line-height: 16px;
  text-align: center;
}

.tips button {
  margin-left: 15px;
  color: #706e6b;
}

/* taskbar */
.taskbar {
  display: grid;
  grid-template-columns: 1fr auto 1fr;
  align-items: center;
  height: 48px;
  background: #202020;
  color: #fff;
  font-size: 11px;
  line-height: 16px;
}

.weather {
  display: flex;
  align-items: center;
  gap: 7px;
  padding-left: 17px;
}

.soft {
  color: #cfcfcf;
}

.task-center {
  display: flex;
  align-items: center;
}

.task {
  position: relative;
  width: 44px;
  height: 44px;
}

.task-search {
  display: flex;
  align-items: center;
  gap: 9px;
  width: 220px;
  height: 32px;
  margin: 0 2px;
  padding: 0 5px 0 11px;
  border: 1px solid #565656;
  border-radius: 16px;
  background: #3d3d3d;
}

.task-search input {
  flex: 1;
  min-width: 0;
  font-size: 13px;
}

.task-search input::placeholder {
  color: #cfcfcf;
}

.running::after,
.current::after {
  content: '';
  position: absolute;
}

.task.running::after {
  bottom: 3px;
  width: 6px;
  height: 3px;
  border-radius: 2px;
  background: #9a9a9a;
}

.task.current {
  border-radius: 4px;
  background: #333;
}

.task.current::after {
  bottom: 2px;
  width: 16px;
  height: 3px;
  border-radius: 2px;
  background: #5bb8ec;
}

.task-badge,
.task-pic {
  position: absolute;
  top: 5px;
  right: 5px;
}

.task-badge {
  width: 16px;
  border-radius: 50%;
  background: #c91d5c;
  font-size: 9px;
}

.tray {
  display: flex;
  align-items: center;
  justify-content: flex-end;
  gap: 16px;
  padding-right: 20px;
}

.tray-pair {
  display: flex;
  gap: 6px;
  margin-right: 2px;
}

.tray time {
  text-align: right;
}

.tray time + svg {
  margin-left: -9px;
}
</style>
